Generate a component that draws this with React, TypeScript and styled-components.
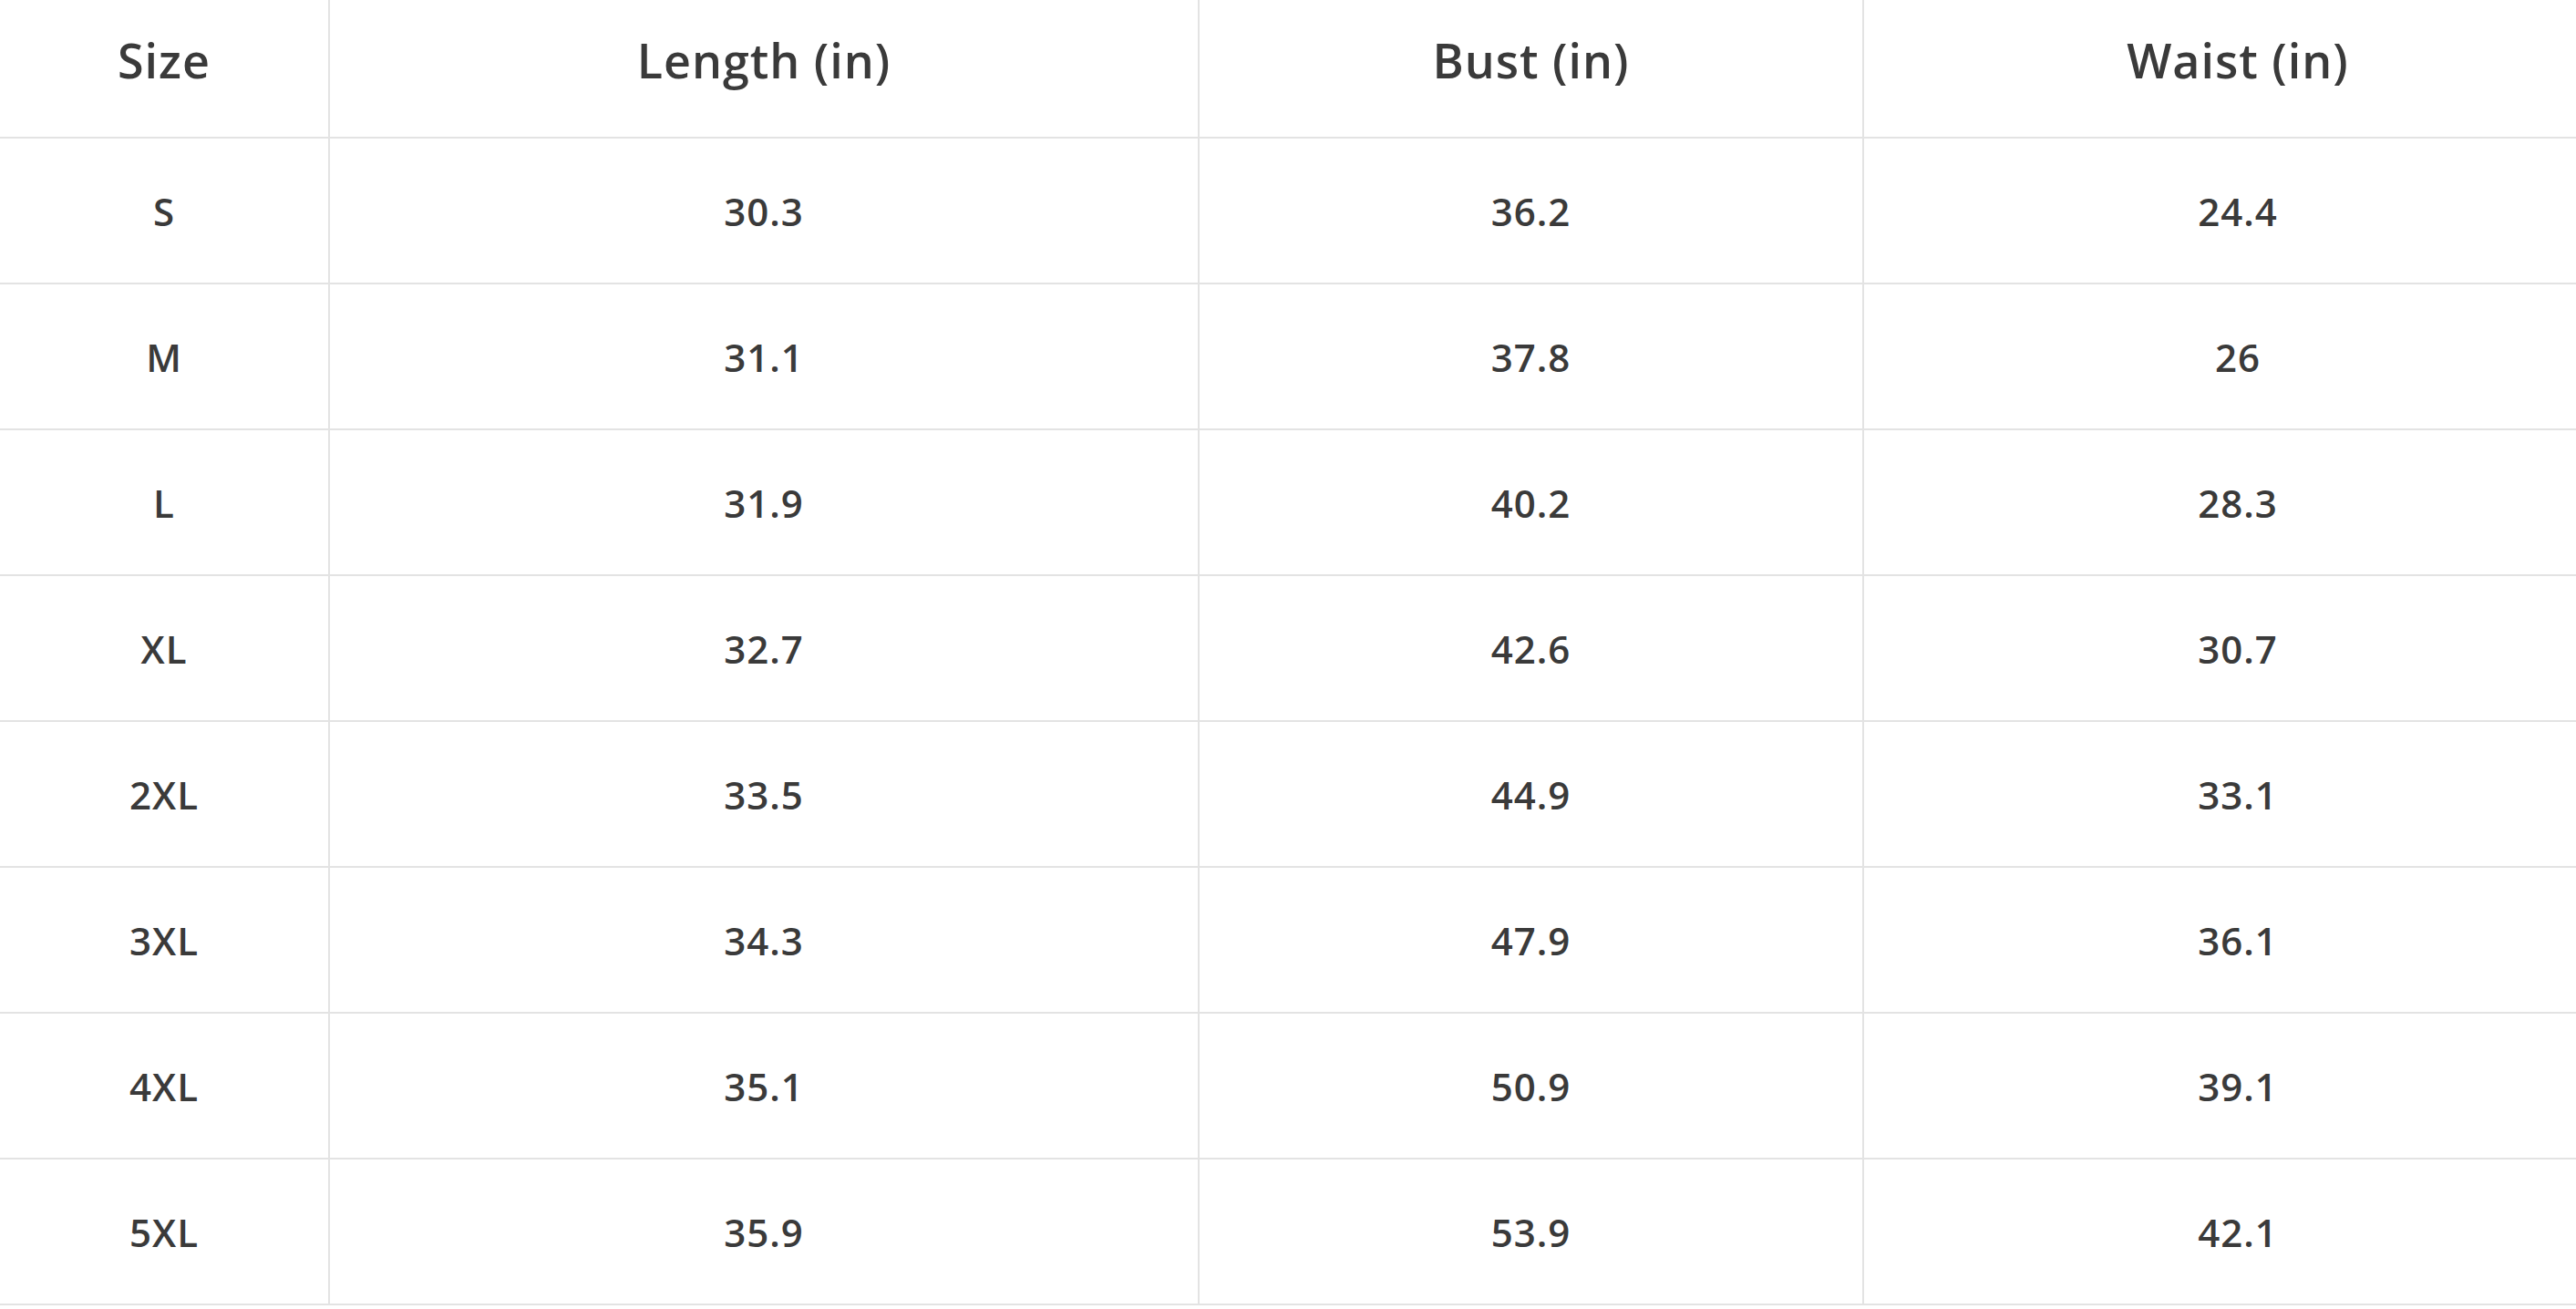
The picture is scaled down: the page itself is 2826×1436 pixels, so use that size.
import React from "react";
import styled, { createGlobalStyle } from "styled-components";

const Global = createGlobalStyle`
  html, body {
    margin: 0;
    padding: 0;
    background: #ffffff;
    overflow: hidden;
  }
  body {
    font-family: "Open Sans", "Liberation Sans", sans-serif;
    color: #3a3a3a;
  }
`;

const Viewport = styled.div`
  width: 100vw;
  height: 100vh;
  overflow: hidden;
`;

const Table = styled.div`
  display: grid;
  grid-template-columns: 362px 954px 729px 820px;
  width: max-content;
`;

const Cell = styled.div<{ $last?: boolean; $head?: boolean }>`
  display: flex;
  align-items: center;
  justify-content: center;
  box-sizing: border-box;
  height: ${(p) => (p.$head ? 152 : 160)}px;
  padding-bottom: ${(p) => (p.$head ? 20 : 0)}px;
  border-bottom: 2px solid #e3e3e3;
  border-right: ${(p) => (p.$last ? "none" : "2px solid #e3e3e3")};
  font-size: ${(p) => (p.$head ? 52 : 42)}px;
  font-weight: 600;
  letter-spacing: ${(p) => (p.$head ? 1 : 1)}px;
  color: #3a3a3a;
`;

const headers = ["Size", "Length (in)", "Bust (in)", "Waist (in)"];
const rows = [
  ["S", "30.3", "36.2", "24.4"],
  ["M", "31.1", "37.8", "26"],
  ["L", "31.9", "40.2", "28.3"],
  ["XL", "32.7", "42.6", "30.7"],
  ["2XL", "33.5", "44.9", "33.1"],
  ["3XL", "34.3", "47.9", "36.1"],
  ["4XL", "35.1", "50.9", "39.1"],
  ["5XL", "35.9", "53.9", "42.1"],
];

export default function App() {
  return (
    <>
      <Global />
      <Viewport>
        <Table>
          {headers.map((h, i) => (
            <Cell key={h} $head $last={i === headers.length - 1}>
              {h}
            </Cell>
          ))}
          {rows.map((r) =>
            r.map((v, i) => (
              <Cell key={r[0] + i} $last={i === r.length - 1}>
                {v}
              </Cell>
            ))
          )}
        </Table>
      </Viewport>
    </>
  );
}
